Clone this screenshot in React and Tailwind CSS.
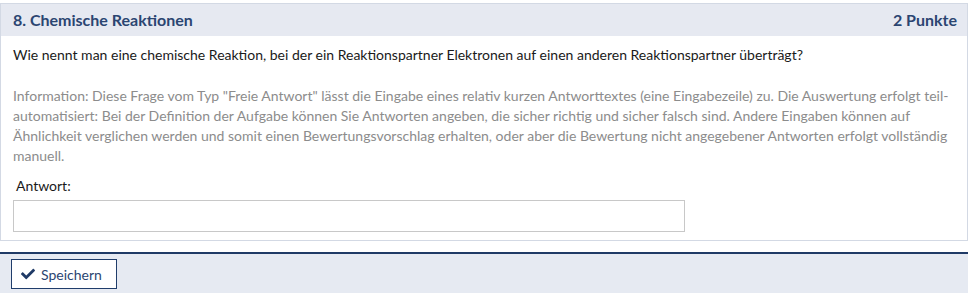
import { FaCheck } from 'react-icons/fa'

const font = { fontFamily: 'Lato, "Open Sans", sans-serif' }

export default function App() {
  return (
    <div className="bg-white w-[969px] h-[299px] pt-[3px]" style={font}>
      <div className="w-[968px] border border-[#d3d9e4]">
        <div className="h-[32px] bg-[#e6e9f1] flex items-center justify-between px-[10px] text-[16px] font-bold text-[#2b4571]">
          <span className="pl-[2px]">8. Chemische Reaktionen</span>
          <span>2 Punkte</span>
        </div>
        <div className="px-[12px] pt-[9px] pb-[8px]">
          <p className="text-[14px] leading-[20px] text-[#1a1a1a]">
            Wie nennt man eine chemische Reaktion, bei der ein Reaktionspartner Elektronen auf einen anderen Reaktionspartner überträgt?
          </p>
          <p className="mt-[21px] text-[14px] leading-[20px] text-[#8c8c8c]">
            Information: Diese Frage vom Typ "Freie Antwort" lässt die Eingabe eines relativ kurzen Antworttextes (eine Eingabezeile) zu. Die Auswertung erfolgt teil-automatisiert: Bei der Definition der Aufgabe können Sie Antworten angeben, die sicher richtig und sicher falsch sind. Andere Eingaben können auf Ähnlichkeit verglichen werden und somit einen Bewertungsvorschlag erhalten, oder aber die Bewertung nicht angegebener Antworten erfolgt vollständig manuell.
          </p>
          <label className="block mt-[10px] pl-[3px] text-[14px] leading-[20px] text-[#1a1a1a]">Antwort:</label>
          <input
            type="text"
            className="mt-[4px] block w-[672px] h-[32px] border border-[#c8c8c8] bg-white outline-none"
          />
        </div>
      </div>
      <div className="mt-[11px] w-[968px] h-[41px] bg-[#e6eaf2] border-t-2 border-[#1f3a66] pt-[5px] pl-[11px]">
        <button
          type="button"
          className="h-[30px] w-[106px] border border-[#203d6b] bg-white flex items-center gap-[6px] pl-[9px] text-[14px] text-[#2b4571]"
        >
          <FaCheck className="text-[#1f3a66] text-[14px]" />
          Speichern
        </button>
      </div>
    </div>
  )
}
